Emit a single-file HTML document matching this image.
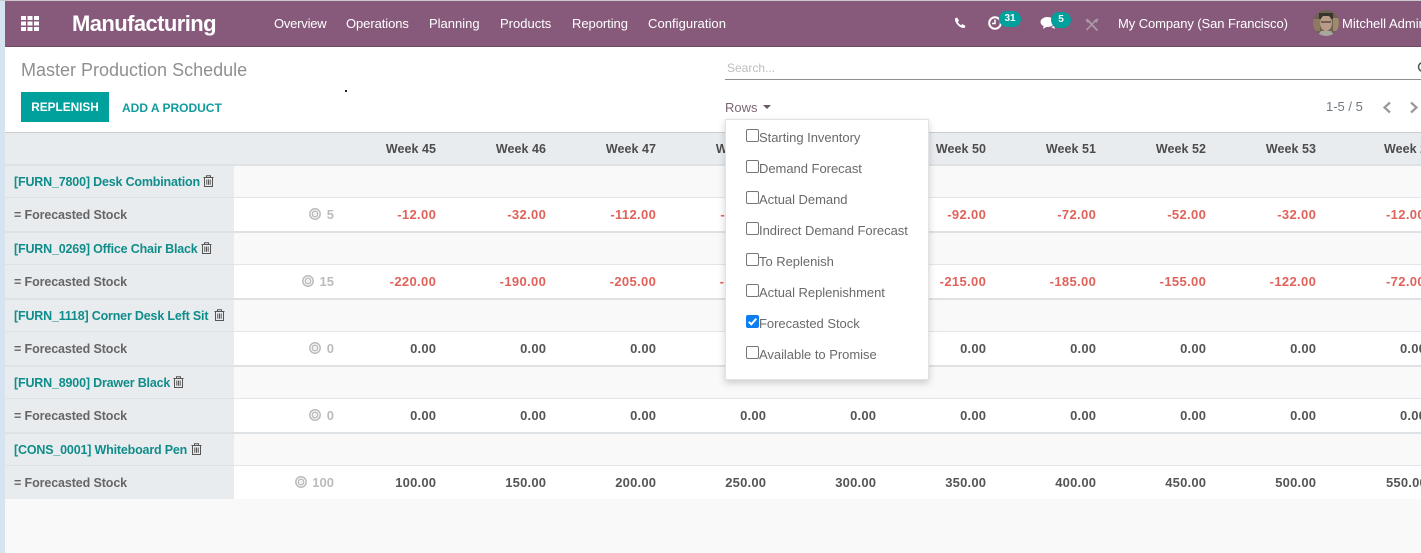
<!DOCTYPE html>
<html><head><meta charset="utf-8"><style>
*{box-sizing:border-box;margin:0;padding:0}
html,body{width:1421px;height:553px;overflow:hidden;background:#f9f9f9;font-family:"Liberation Sans",sans-serif}
.a{position:absolute;white-space:nowrap}
.nav{color:#fff;font-size:13px;top:16px;line-height:16px}
.wk{top:141px;font-size:12.5px;font-weight:bold;color:#4c4c4c;line-height:16px;text-align:right;width:100px;letter-spacing:.05px}
.val{font-size:13px;font-weight:bold;color:#555;line-height:16px;text-align:right;width:100.200px;letter-spacing:.2px}
.neg{color:#e0625a;letter-spacing:.35px}
.lbl{left:14px;font-size:12.5px;font-weight:bold;color:#666;line-height:16px;letter-spacing:-.11px}
.prod{left:14px;font-size:12.5px;font-weight:bold;color:#0f8d8a;line-height:16px;letter-spacing:-.18px}
.cb{position:absolute;left:746px;width:13px;height:13px;border:1px solid #767676;border-radius:2px;background:#fff}
.it{left:759px;font-size:13px;color:#6a6a6a;line-height:16px;letter-spacing:-.03px}
.tgt{font-size:13px;font-weight:bold;color:#bbb;line-height:16px;text-align:right;width:60px;left:274px}
.rw{left:234px;width:1187px;height:36px;background:#fff;border-top:1px solid #e3e6e9;border-bottom:2px solid #dfe2e5}
</style></head><body>
<div class="a" style="left:0;top:0;width:5px;height:553px;background:#d6e3f1"></div>
<div class="a" style="left:0;top:0;width:1421px;height:1px;background:#c9c9c9"></div>
<div class="a" style="left:5px;top:1px;width:1416px;height:46px;background:#875a7b;border-bottom:1px solid #6f4a66"></div>
<svg class="a" style="left:21px;top:16px" width="18" height="15"><g fill="#fff"><rect x="0" y="0" width="5" height="4"/><rect x="6.5" y="0" width="5" height="4"/><rect x="13" y="0" width="5" height="4"/><rect x="0" y="5.5" width="5" height="4"/><rect x="6.5" y="5.5" width="5" height="4"/><rect x="13" y="5.5" width="5" height="4"/><rect x="0" y="11" width="5" height="4"/><rect x="6.5" y="11" width="5" height="4"/><rect x="13" y="11" width="5" height="4"/></g></svg>
<div class="a" style="left:72px;top:10px;color:#fff;font-size:22px;font-weight:bold;line-height:27px;letter-spacing:-.58px">Manufacturing</div>
<div class="a nav" style="left:274px;letter-spacing:-.22px">Overview</div>
<div class="a nav" style="left:346px;letter-spacing:-.08px">Operations</div>
<div class="a nav" style="left:429px">Planning</div>
<div class="a nav" style="left:500px">Products</div>
<div class="a nav" style="left:572px;letter-spacing:-.05px">Reporting</div>
<div class="a nav" style="left:648px;letter-spacing:.05px">Configuration</div>
<svg class="a" style="left:954px;top:17px" width="12" height="12" viewBox="0 0 12 12"><path d="M1 1.500 3 .5 5 3.500 3.800 5C4.500 6.500 5.500 7.500 7 8.200L8.500 7 11.500 9 10.500 11C6 11.500 .5 6 1 1.500Z" fill="#fff"/></svg>
<svg class="a" style="left:987px;top:15px" width="16" height="16" viewBox="0 0 16 16"><circle cx="8" cy="8" r="5.800" fill="none" stroke="#fff" stroke-width="2"/><path d="M8 4.500V8.500H5" fill="none" stroke="#fff" stroke-width="1.500"/></svg>
<div class="a" style="left:999px;top:11px;width:22px;height:16px;border-radius:8px;background:#00a09d;color:#fff;font-size:10px;font-weight:bold;line-height:16px;text-align:center">31</div>
<svg class="a" style="left:1040px;top:15px" width="18" height="16" viewBox="0 0 18 16"><ellipse cx="7.500" cy="7" rx="7" ry="5" fill="#fff"/><path d="M4 10 3 14 8 11Z" fill="#fff"/><path d="M11 12 15 14 14 11Z" fill="#fff"/></svg>
<div class="a" style="left:1051px;top:12px;width:20px;height:16px;border-radius:8px;background:#00a09d;color:#fff;font-size:10px;font-weight:bold;line-height:16px;text-align:center">5</div>
<svg class="a" style="left:1085px;top:18px" width="14" height="14" viewBox="0 0 14 14"><path d="M3 2.500 12.500 12.500" stroke="#ab9aa7" stroke-width="1.800" fill="none"/><path d="M11.500 1.500 1.500 12" stroke="#ab9aa7" stroke-width="1.600" fill="none"/><path d="M.8 1.500 2.500.8 5 3 3 5 .8 3Z" fill="#ab9aa7"/><path d="M9 2.500 12.500 .5 13.500 1.500 11.500 5Z" fill="#ab9aa7"/></svg>
<div class="a nav" style="left:1118px;letter-spacing:-.08px">My Company (San Francisco)</div>
<svg class="a" style="left:1313px;top:10px" width="26" height="26" viewBox="0 0 26 26"><defs><clipPath id="av"><circle cx="13" cy="13" r="13"/></clipPath></defs><g clip-path="url(#av)"><rect width="26" height="26" fill="#6f6153"/><rect x="0" y="9" width="7" height="12" fill="#8d7a60"/><rect x="20" y="8" width="6" height="13" fill="#a08a6c"/><path d="M6 3H20V9H6Z" fill="#3a342f"/><ellipse cx="13" cy="13" rx="6" ry="8" fill="#b89c88"/><path d="M6 3H20V8L16 6H9L6 9Z" fill="#3a342f"/><path d="M8 12H18" stroke="#5a4c46" stroke-width="1.500"/><path d="M4 26 8 21H18L22 26Z" fill="#a9a6a0"/></g></svg>
<div class="a nav" style="left:1342px">Mitchell Admin</div>

<div class="a" style="left:5px;top:47px;width:1416px;height:86px;background:#fff;border-bottom:1px solid #ccc"></div>
<div class="a" style="left:21px;top:59px;font-size:18px;color:#8f8f8f;line-height:23px">Master Production Schedule</div>
<div class="a" style="left:21px;top:92px;width:88px;height:30px;background:#00a09d;color:#fff;font-size:11.800px;font-weight:bold;line-height:31px;text-align:center">REPLENISH</div>
<div class="a" style="left:122px;top:100px;color:#119c9c;font-size:12px;font-weight:bold;line-height:16px">ADD A PRODUCT</div>
<div class="a" style="left:345px;top:90px;width:2px;height:2px;background:#222"></div>
<div class="a" style="left:727px;top:61px;font-size:12px;color:#bdbdbd;line-height:14px">Search...</div>
<div class="a" style="left:725px;top:79px;width:696px;height:1px;background:#8f8f8f"></div>
<svg class="a" style="left:1416px;top:61px" width="5" height="12"><circle cx="7" cy="6" r="4.500" fill="none" stroke="#555" stroke-width="1.500"/></svg>
<div class="a" style="left:725px;top:100px;font-size:13px;color:#7b6673;line-height:16px">Rows</div>
<div class="a" style="left:763px;top:105px;border:4.500px solid transparent;border-top-color:#6a5a64;border-bottom:0"></div>
<div class="a" style="left:1326px;top:99px;font-size:13px;color:#6f7780;line-height:16px">1-5 / 5</div>
<svg class="a" style="left:1381px;top:101px" width="40" height="13"><path d="M9 1.500 3.500 6.500 9 11.500M30 1.500 35.500 6.500 30 11.500" fill="none" stroke="#999" stroke-width="2.200"/></svg>

<div class="a" style="left:5px;top:133px;width:1416px;height:33px;background:#e9ecef;border-bottom:2px solid #dfe2e5"></div>
<div class="a wk" style="left:336px">Week 45</div><div class="a wk" style="left:446px">Week 46</div><div class="a wk" style="left:556px">Week 47</div><div class="a wk" style="left:666px">Week 48</div><div class="a wk" style="left:886px">Week 50</div><div class="a wk" style="left:996px">Week 51</div><div class="a wk" style="left:1106px">Week 52</div><div class="a wk" style="left:1216px">Week 53</div><div class="a wk" style="left:1384px;text-align:left">Week 2</div>

<div class="a rw" style="top:197px"></div>
<div class="a rw" style="top:264px"></div>
<div class="a rw" style="top:331px"></div>
<div class="a rw" style="top:398px"></div>
<div class="a rw" style="top:465px;height:34px;border-bottom:0"></div>

<div class="a" style="left:5px;top:166px;width:229px;height:333px;background:#e9ecef"></div>
<div class="a" style="left:5px;top:197px;width:229px;height:1px;background:#dfe2e5"></div>
<div class="a" style="left:5px;top:231px;width:229px;height:2px;background:#dfe2e5"></div>
<div class="a" style="left:5px;top:264px;width:229px;height:1px;background:#dfe2e5"></div>
<div class="a" style="left:5px;top:298px;width:229px;height:2px;background:#dfe2e5"></div>
<div class="a" style="left:5px;top:331px;width:229px;height:1px;background:#dfe2e5"></div>
<div class="a" style="left:5px;top:365px;width:229px;height:2px;background:#dfe2e5"></div>
<div class="a" style="left:5px;top:398px;width:229px;height:1px;background:#dfe2e5"></div>
<div class="a" style="left:5px;top:432px;width:229px;height:2px;background:#dfe2e5"></div>
<div class="a" style="left:5px;top:465px;width:229px;height:1px;background:#dfe2e5"></div>

<div class="a prod" style="top:174px">[FURN_7800] Desk Combination</div>
<div class="a prod" style="top:241px">[FURN_0269] Office Chair Black</div>
<div class="a prod" style="top:308px">[FURN_1118] Corner Desk Left Sit</div>
<div class="a prod" style="top:375px">[FURN_8900] Drawer Black</div>
<div class="a prod" style="top:442px">[CONS_0001] Whiteboard Pen</div>
<svg width="0" height="0" style="position:absolute"><defs><g id="t" fill="none" stroke="#555" stroke-width="1"><path d="M.5 2.500H10.500M3.500 2.500V.8H7.500V2.500M1.500 2.500V11.500H9.500V2.500M3.800 4.500V9.800M5.500 4.500V9.800M7.200 4.500V9.800"/></g><g id="g" fill="none" stroke="#bbb"><circle cx="6" cy="6" r="5.200" stroke-width="1.500"/><circle cx="6" cy="6" r="2.700" stroke-width="1.500"/><circle cx="6" cy="6" r=".6" fill="#bbb" stroke="none"/></g></defs></svg>
<svg class="a" style="left:203px;top:175px" width="11" height="12"><use href="#t"/></svg>
<svg class="a" style="left:201px;top:242px" width="11" height="12"><use href="#t"/></svg>
<svg class="a" style="left:214px;top:309px" width="11" height="12"><use href="#t"/></svg>
<svg class="a" style="left:173px;top:376px" width="11" height="12"><use href="#t"/></svg>
<svg class="a" style="left:191px;top:443px" width="11" height="12"><use href="#t"/></svg>

<div class="a lbl" style="top:207px">= Forecasted Stock</div>
<div class="a lbl" style="top:274px">= Forecasted Stock</div>
<div class="a lbl" style="top:341px">= Forecasted Stock</div>
<div class="a lbl" style="top:408px">= Forecasted Stock</div>
<div class="a lbl" style="top:475px">= Forecasted Stock</div>

<svg class="a" style="left:309px;top:208px" width="12" height="12"><use href="#g"/></svg><div class="a tgt" style="top:207px">5</div>
<svg class="a" style="left:302px;top:275px" width="12" height="12"><use href="#g"/></svg><div class="a tgt" style="top:274px">15</div>
<svg class="a" style="left:309px;top:342px" width="12" height="12"><use href="#g"/></svg><div class="a tgt" style="top:341px">0</div>
<svg class="a" style="left:309px;top:409px" width="12" height="12"><use href="#g"/></svg><div class="a tgt" style="top:408px">0</div>
<svg class="a" style="left:295px;top:476px" width="12" height="12"><use href="#g"/></svg><div class="a tgt" style="top:475px">100</div>

<div class="a val neg" style="left:336px;top:207px">-12.00</div><div class="a val neg" style="left:446px;top:207px">-32.00</div><div class="a val neg" style="left:556px;top:207px">-112.00</div><div class="a val neg" style="left:666px;top:207px">-112.00</div><div class="a val neg" style="left:886px;top:207px">-92.00</div><div class="a val neg" style="left:996px;top:207px">-72.00</div><div class="a val neg" style="left:1106px;top:207px">-52.00</div><div class="a val neg" style="left:1216px;top:207px">-32.00</div><div class="a val neg" style="left:1386px;top:207px;text-align:left">-12.00</div>
<div class="a val neg" style="left:336px;top:274px">-220.00</div><div class="a val neg" style="left:446px;top:274px">-190.00</div><div class="a val neg" style="left:556px;top:274px">-205.00</div><div class="a val neg" style="left:666px;top:274px">-175.00</div><div class="a val neg" style="left:886px;top:274px">-215.00</div><div class="a val neg" style="left:996px;top:274px">-185.00</div><div class="a val neg" style="left:1106px;top:274px">-155.00</div><div class="a val neg" style="left:1216px;top:274px">-122.00</div><div class="a val neg" style="left:1386px;top:274px;text-align:left">-72.00</div>
<div class="a val" style="left:336px;top:341px">0.00</div><div class="a val" style="left:446px;top:341px">0.00</div><div class="a val" style="left:556px;top:341px">0.00</div><div class="a val" style="left:886px;top:341px">0.00</div><div class="a val" style="left:996px;top:341px">0.00</div><div class="a val" style="left:1106px;top:341px">0.00</div><div class="a val" style="left:1216px;top:341px">0.00</div><div class="a val" style="left:1400px;top:341px;text-align:left">0.00</div>
<div class="a val" style="left:336px;top:408px">0.00</div><div class="a val" style="left:446px;top:408px">0.00</div><div class="a val" style="left:556px;top:408px">0.00</div><div class="a val" style="left:666px;top:408px">0.00</div><div class="a val" style="left:776px;top:408px">0.00</div><div class="a val" style="left:886px;top:408px">0.00</div><div class="a val" style="left:996px;top:408px">0.00</div><div class="a val" style="left:1106px;top:408px">0.00</div><div class="a val" style="left:1216px;top:408px">0.00</div><div class="a val" style="left:1400px;top:408px;text-align:left">0.00</div>
<div class="a val" style="left:336px;top:475px">100.00</div><div class="a val" style="left:446px;top:475px">150.00</div><div class="a val" style="left:556px;top:475px">200.00</div><div class="a val" style="left:666px;top:475px">250.00</div><div class="a val" style="left:776px;top:475px">300.00</div><div class="a val" style="left:886px;top:475px">350.00</div><div class="a val" style="left:996px;top:475px">400.00</div><div class="a val" style="left:1106px;top:475px">450.00</div><div class="a val" style="left:1216px;top:475px">500.00</div><div class="a val" style="left:1386px;top:475px;text-align:left">550.00</div>

<div class="a" style="left:725px;top:119px;width:204px;height:261px;background:#fff;border:1px solid #e2e2e2;box-shadow:0 3px 7px rgba(0,0,0,.18)"></div>
<div class="cb" style="top:129px"></div><div class="a it" style="top:130px">Starting Inventory</div>
<div class="cb" style="top:160px"></div><div class="a it" style="top:161px">Demand Forecast</div>
<div class="cb" style="top:191px"></div><div class="a it" style="top:192px">Actual Demand</div>
<div class="cb" style="top:222px"></div><div class="a it" style="top:223px">Indirect Demand Forecast</div>
<div class="cb" style="top:253px"></div><div class="a it" style="top:254px">To Replenish</div>
<div class="cb" style="top:284px"></div><div class="a it" style="top:285px">Actual Replenishment</div>
<svg class="a" style="left:746px;top:315px" width="13" height="13"><rect width="13" height="13" rx="2" fill="#0d7ef0"/><path d="M2.800 6.800 5.300 9.300 10.300 3.600" fill="none" stroke="#fff" stroke-width="2"/></svg><div class="a it" style="top:316px">Forecasted Stock</div>
<div class="cb" style="top:346px"></div><div class="a it" style="top:347px">Available to Promise</div>
</body></html>
